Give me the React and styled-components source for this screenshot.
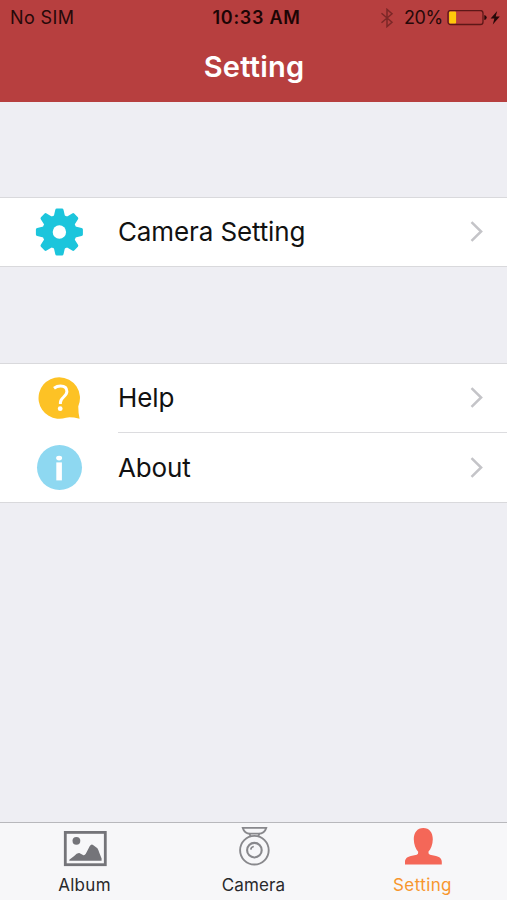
import React from 'react'
import styled, { createGlobalStyle } from 'styled-components'

const GlobalStyle = createGlobalStyle`
    body {
        margin: 0;
        background: #eeeef3;
        font-family: Inter, "Liberation Sans", sans-serif;
    }
    * {
        box-sizing: border-box;
    }
    svg {
        display: block;
        flex: none;
    }
`
const Screen = styled.div`
    display: flex;
    flex-direction: column;
    width: 507px;
    height: 900px;
    overflow: hidden;
    background: #eeeef3;
`
const Header = styled.header`
    height: 102px;
    background: #b73f3f;
`
const StatusBar = styled.div`
    display: grid;
    grid-template-columns: 1fr auto 1fr;
    align-items: center;
    height: 35px;
    padding: 0 6px 0 10px;
    font-size: 18px;
    line-height: 36px;
    color: #260909;
`
const Carrier = styled.span`
    letter-spacing: 0.4px;
`
const Time = styled.span`
    padding-left: 2px;
    font-weight: 600;
    letter-spacing: 0.7px;
    color: #1c0505;
`
const StatusRight = styled.div`
    display: flex;
    align-items: center;
    justify-content: flex-end;
`
const Percent = styled.span`
    margin: 0 4px 0 10px;
    letter-spacing: -0.3px;
`
const Title = styled.h1`
    margin: 0;
    padding-left: 1px;
    font-size: 29px;
    font-weight: 600;
    line-height: 64px;
    letter-spacing: 0.2px;
    text-align: center;
    color: #fff;
`
const Content = styled.main`
    flex: 1;
    display: flex;
    flex-direction: column;
    gap: 96px;
    padding-top: 95px;
`
const Group = styled.section`
    border-top: 1px solid #d9d9dc;
    border-bottom: 1px solid #d9d9dc;
    background: #fff;
`
const Row = styled.div`
    display: flex;
    align-items: center;
    height: ${props => props.$height}px;
`
const RowIcon = styled.div`
    display: flex;
    justify-content: center;
    width: 118px;
`
const RowBody = styled.div`
    flex: 1;
    display: flex;
    align-items: center;
    justify-content: space-between;
    height: 100%;
    padding-right: 22px;
    border-bottom: ${props => props.$divided ? '1px solid #dcdcdf' : 'none'};
`
const RowLabel = styled.span`
    font-size: 26px;
    line-height: 36px;
    letter-spacing: -0.12px;
    color: #111;
`
const TabBar = styled.nav`
    display: grid;
    grid-template-columns: repeat(3, 1fr);
    height: 78px;
    border-top: 1px solid #b8b8bc;
    background: #f7f7f9;
`
const Tab = styled.div`
    display: flex;
    flex-direction: column;
    align-items: center;
    padding-top: 3px;
    color: ${props => props.$active ? '#f7962d' : '#29292b'};
`
const TabLabel = styled.span`
    margin-top: 2px;
    font-size: 17px;
    line-height: 26px;
    letter-spacing: ${props => props.$spacing}px;
`

const BluetoothIcon = () => (
    <svg width="14" height="20" viewBox="0 0 14 20" fill="none" stroke="#7c2727" strokeWidth="1.5">
        <path d="M1.5 5.2 12 14.2 7 18.6V1.4L12 5.8 1.5 14.8" />
    </svg>
)

const BatteryIcon = () => (
    <svg width="54" height="16" viewBox="0 0.5 54 16">
        <rect x="1" y="1" width="35" height="14" rx="2.6" fill="none" stroke="#5d1717" strokeWidth="1.3" />
        <rect x="2.1" y="2.1" width="7" height="11.8" rx="1" fill="#ffc90a" />
        <path d="M37.3 5.5Q39.7 6 39.7 8T37.3 10.5Z" fill="#260909" />
        <path d="M50.2 1.4 43.6 8.9H47.4L45.8 14.9 52.8 7.1H48.7Z" fill="#260909" />
    </svg>
)

const GearIcon = () => (
    <svg width="48" height="48" viewBox="-24.4 -24 48 48" fill="#1cc5dc">
        {[0, 45, 90, 135, 180, 225, 270, 315].map(angle => (
            <path
                key={angle}
                transform={`rotate(${angle})`}
                d="M-6-14-4.1-22.2Q-3.8-23.5-2.6-23.5H2.6Q3.8-23.5 4.1-22.2L6-14Z"
            />
        ))}
        <circle r="17.2" />
        <circle r="6.7" fill="#fff" />
    </svg>
)

const HelpIcon = () => (
    <svg width="48" height="48" viewBox="0 1 48 48">
        <path d="M24.2 3.2A20.8 20.8 0 1 0 31 43.7Q35.5 42.7 44.6 44.7Q43.2 39 43.3 32.2A20.8 20.8 0 0 0 24.2 3.2Z" fill="#fdc225" />
        <path d="M19 14.2Q22 12 25.5 12C29.7 12 31.9 14.3 31.9 17.6C31.9 22.4 25.4 23.6 25.4 28.4V30" fill="none" stroke="#fff" strokeWidth="3" />
        <circle cx="25.2" cy="34.7" r="2.4" fill="#fff" />
    </svg>
)

const AboutIcon = () => (
    <svg width="48" height="48" viewBox="0 0 48 48">
        <circle cx="24.5" cy="23.5" r="22.5" fill="#8ed8f1" />
        <rect x="21.3" y="18.4" width="5.6" height="18" fill="#fff" />
        <ellipse cx="24.1" cy="14.1" rx="3" ry="2.4" fill="#fff" />
    </svg>
)

const Chevron = () => (
    <svg width="16" height="24" viewBox="0.5 0.5 16 24" fill="none" stroke="#c4c4c8" strokeWidth="2.5">
        <path d="M3 2.7 12.6 12 3 21.3" />
    </svg>
)

const AlbumIcon = () => (
    <svg width="44" height="44" viewBox="0 0.6 44 44">
        <rect x="2.3" y="7" width="40" height="32.3" fill="none" stroke="#747479" strokeWidth="2.8" />
        <circle cx="13.4" cy="15.4" r="3.9" fill="#747479" />
        <path d="M6.3 35.3V34.4L11.2 30.6Q14 27.2 16.3 27.5L20 29.5Q21.4 30.6 22.8 28.4L26.8 20.6Q28.4 18 30.4 19.8L34.4 22.8Q35.5 24.4 36.3 27.4L38.6 33.2V35.3Z" fill="#747479" />
    </svg>
)

const CameraIcon = () => (
    <svg width="44" height="44" viewBox="0 0 44 44" fill="none" stroke="#88888c" strokeWidth="1.9">
        <path d="M10.8 1.9H34.2C33.2 5.3 30.3 7.6 26.6 7.6H18.2C14.6 7.6 11.8 5.3 10.8 1.9Z" />
        <path d="M17.2 7.4 18.6 10.2M27.6 7.4 26.2 10.2" />
        <circle cx="22.4" cy="24.2" r="14.3" />
        <circle cx="22.4" cy="24.2" r="7.3" strokeWidth="2.1" />
        <path d="M18.8 23.6Q19 20.8 21.8 20.5" strokeWidth="1.6" />
    </svg>
)

const UserIcon = () => (
    <svg width="44" height="44" viewBox="0 0 44 44">
        <path d="M22.3 2C28.4 2 31.8 6.8 31.8 13.2C31.8 18.4 29.8 22.9 27.4 25.8Q27.2 28.2 29 28.7L35 30C39.2 31 40.8 33.2 40.8 36V38.6H4V36C4 33.2 5.6 31 9.8 30L15.8 28.7Q17.5 28.2 17.2 25.8C14.8 22.9 12.8 18.4 12.8 13.2C12.8 6.8 16.2 2 22.3 2Z" fill="#f46758" />
    </svg>
)

const SettingRow = ({ icon, label, height, divided }) => (
    <Row $height={height}>
        <RowIcon>{icon}</RowIcon>
        <RowBody $divided={divided}>
            <RowLabel>{label}</RowLabel>
            <Chevron />
        </RowBody>
    </Row>
)

const App = () => {
    return (
        <Screen>
            <GlobalStyle />
            <Header>
                <StatusBar>
                    <Carrier>No SIM</Carrier>
                    <Time>10:33 AM</Time>
                    <StatusRight>
                        <BluetoothIcon />
                        <Percent>20%</Percent>
                        <BatteryIcon />
                    </StatusRight>
                </StatusBar>
                <Title>Setting</Title>
            </Header>
            <Content>
                <Group>
                    <SettingRow icon={<GearIcon />} label="Camera Setting" height={68} />
                </Group>
                <Group>
                    <SettingRow icon={<HelpIcon />} label="Help" height={69} divided />
                    <SettingRow icon={<AboutIcon />} label="About" height={69} />
                </Group>
            </Content>
            <TabBar>
                <Tab>
                    <AlbumIcon />
                    <TabLabel $spacing={0.3}>Album</TabLabel>
                </Tab>
                <Tab>
                    <CameraIcon />
                    <TabLabel $spacing={0.15}>Camera</TabLabel>
                </Tab>
                <Tab $active>
                    <UserIcon />
                    <TabLabel $spacing={0.4}>Setting</TabLabel>
                </Tab>
            </TabBar>
        </Screen>
    )
}

export default App
